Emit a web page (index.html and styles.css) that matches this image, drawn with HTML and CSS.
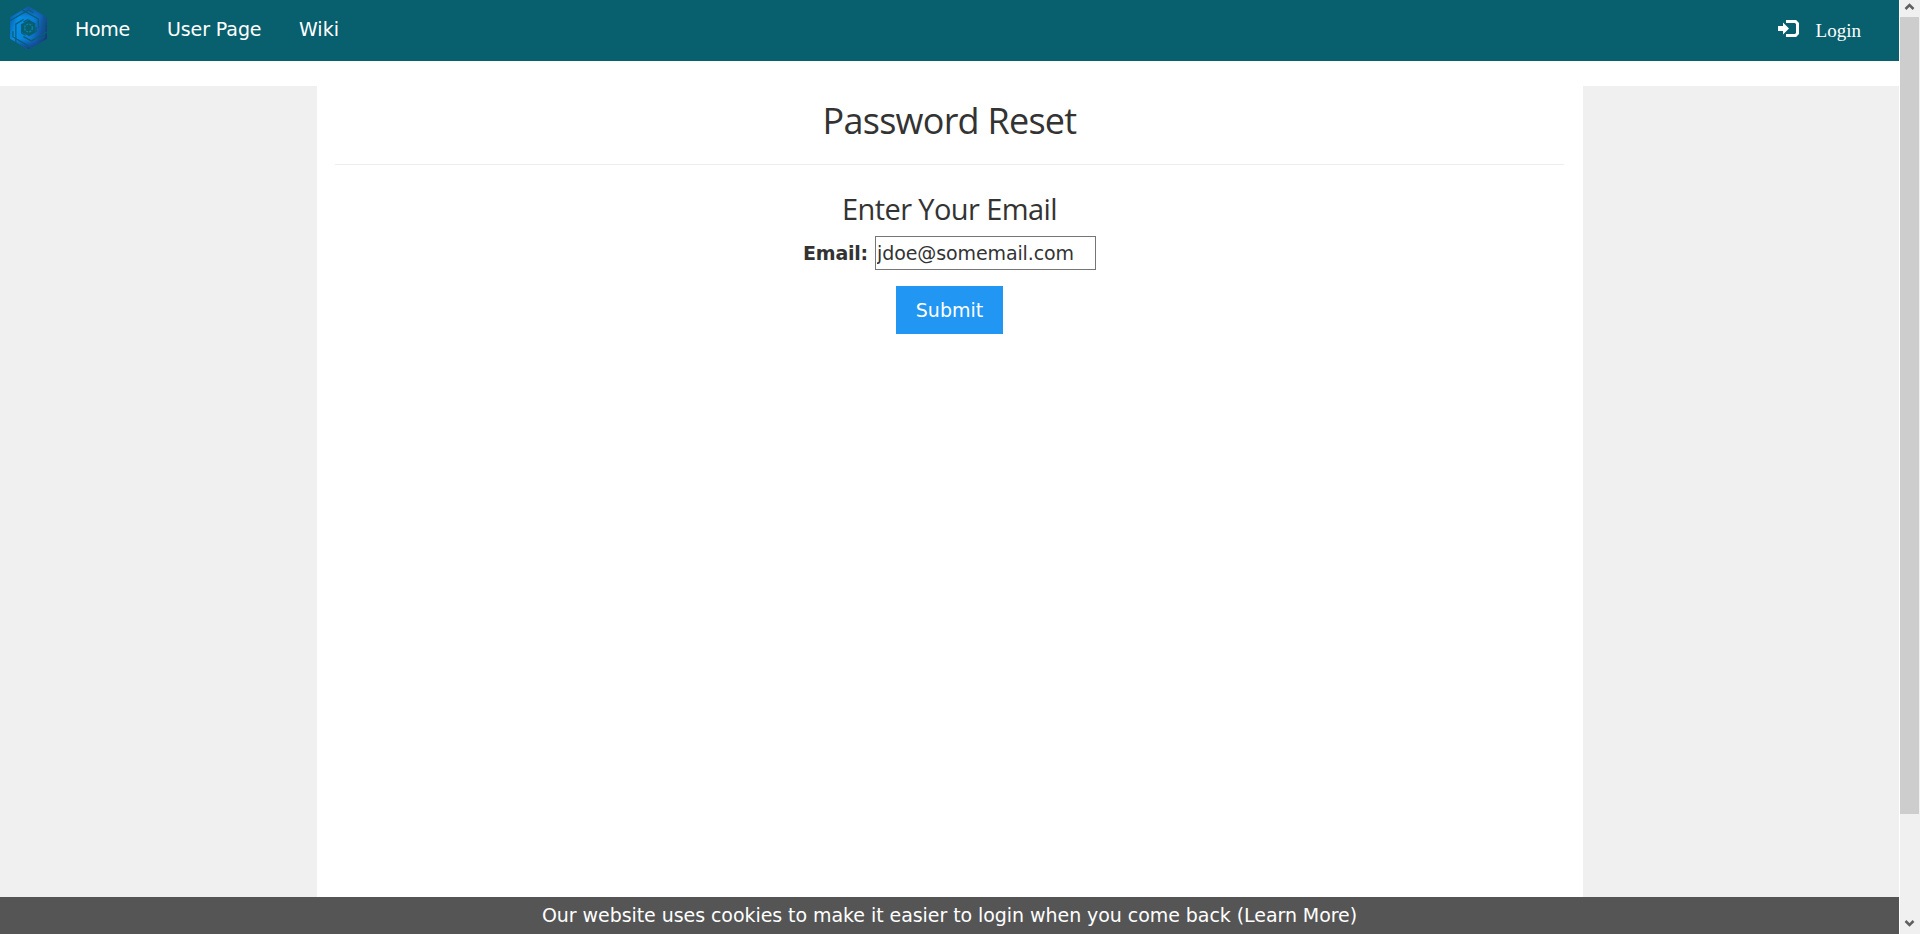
FILE: index.html
```
<!DOCTYPE html>
<html lang="en">
<head>
<meta charset="utf-8">
<title>Password Reset</title>
<link rel="stylesheet" href="styles.css">
</head>
<body>
<div class="page">
  <nav class="navbar">
    <svg class="logo" viewBox="0 0 38 44">
      <defs>
        <linearGradient id="blue" x1="0" y1="0.3" x2="1" y2="0.6">
          <stop offset="0" stop-color="#0a62b4"/>
          <stop offset="0.2" stop-color="#078fe6"/>
          <stop offset="0.6" stop-color="#0a7cd4"/>
          <stop offset="1" stop-color="#183a80"/>
        </linearGradient>
        <linearGradient id="shade" x1="0" y1="0" x2="0" y2="1">
          <stop offset="0" stop-color="#174a94" stop-opacity="0.9"/>
          <stop offset="0.25" stop-color="#174a94" stop-opacity="0"/>
          <stop offset="0.75" stop-color="#173e88" stop-opacity="0"/>
          <stop offset="1" stop-color="#173e88"/>
        </linearGradient>
      </defs>
      <path fill="url(#blue)" d="M19 0 38 11V33L19 44 0 33V11Z"/>
      <path fill="url(#shade)" d="M19 0 38 11V33L19 44 0 33V11Z"/>
      <path fill="#085f6d" d="M19 14 26 18V26L19 30 12 26V18Z"/>
      <g fill="none" stroke="#085f76" stroke-width="1.300">
        <path id="blade" d="M6 37V18L14 13"/>
        <use href="#blade" transform="rotate(120 19 22)"/>
        <use href="#blade" transform="rotate(240 19 22)"/>
        <path id="edge" d="M0 14.500 19 3.500 24 6.500"/>
        <use href="#edge" transform="rotate(120 19 22)"/>
        <use href="#edge" transform="rotate(240 19 22)"/>
        <path id="inner" d="M12 18V27L16 29.500"/>
        <use href="#inner" transform="rotate(120 19 22)"/>
        <use href="#inner" transform="rotate(240 19 22)"/>
      </g>
      <circle cx="19" cy="22" r="4" fill="none" stroke="#0b7fa5" stroke-width="1.500" stroke-dasharray="2.200 1"/>
    </svg>
    <a class="nav-link home">Home</a>
    <a class="nav-link user">User Page</a>
    <a class="nav-link wiki">Wiki</a>
    <a class="login">
      <svg class="login-icon" viewBox="0 0 21 17">
        <path fill="#fff" d="M0 6H5V2.500L11 8.500 5 14.500V11H0Z"/>
        <path fill="none" stroke="#fff" stroke-width="3" d="M8 1.500H17.500L19.500 3.500V13.500L17.500 15.500H8"/>
      </svg>
      <span>Login</span>
    </a>
  </nav>
  <div class="columns">
    <aside class="side"></aside>
    <main class="content">
      <h1 class="title"><span>Password Reset</span></h1>
      <hr class="rule">
      <h2 class="subtitle"><span>Enter Your Email</span></h2>
      <form class="form">
        <div class="field">
          <label class="label" for="email">Email:</label>
          <input class="input" id="email" type="text" value="jdoe@somemail.com">
        </div>
        <button class="submit" type="button">Submit</button>
      </form>
    </main>
    <aside class="side right"></aside>
  </div>
  <footer class="cookies"><span>Our website uses cookies to make it easier to login when you come back (Learn More)</span></footer>
</div>
<div class="scrollbar">
  <svg class="arrow" viewBox="0 0 20 17"><path d="M5.500 9 9.500 5 13.500 9"/></svg>
  <div class="thumb"></div>
  <svg class="arrow down" viewBox="0 0 20 17"><path d="M5.500 4 9.500 8 13.500 4"/></svg>
</div>
</body>
</html>
```
FILE: styles.css
```
* { box-sizing: border-box; }
body {
  margin: 0;
  height: 934px;
  display: flex;
  overflow: hidden;
  background: #fff;
  color: #333;
  font-family: "DejaVu Sans", Verdana, sans-serif;
  font-size: 19px;
}
.page {
  width: 1899px;
  height: 934px;
  display: flex;
  flex-direction: column;
}
.navbar {
  height: 61px;
  flex: none;
  display: flex;
  align-items: flex-start;
  background: #085f6d;
  color: #fff;
  padding-left: 10px;
}
.logo { width: 37px; height: 44px; margin-top: 6px; }
.nav-link { line-height: 22px; margin-top: 18px; white-space: nowrap; }
.home { margin-left: 28px; width: 92px; letter-spacing: -0.3px; }
.user { width: 132px; letter-spacing: -0.1px; }
.login {
  display: flex;
  margin: 18px 38px 0 auto;
  font: 19px/26px "Liberation Serif", serif;
}
.login-icon { width: 21px; height: 17px; margin: 2px 17px 0 0; }
.columns { flex: 1; display: flex; margin-top: 25px; }
.side { width: 317px; background: #f0f0f0; }
.right { width: 316px; }
.content { flex: 1; padding: 0 19px 0 18px; text-align: center; }
.title, .subtitle { font-family: "Open Sans", sans-serif; font-weight: 400; margin: 0; }
.title { font-size: 36px; line-height: 50px; padding-top: 10px; letter-spacing: -0.75px; }
.rule { border: 0; border-top: 1px solid #eee; margin: 18px 0 0; }
.subtitle { font-size: 29px; line-height: 40px; margin-top: 24px; letter-spacing: -0.6px; }
.form { display: flex; flex-direction: column; align-items: center; }
.field { display: flex; align-items: center; margin-top: 7px; }
.label { font-weight: 700; width: 72px; text-align: left; letter-spacing: -0.2px; }
.input {
  width: 221px;
  height: 34px;
  padding: 0 1px;
  border: 1px solid #767676;
  background: #fff;
  color: #333;
  font: inherit;
  letter-spacing: -0.1px;
}
.submit {
  width: 107px;
  height: 48px;
  margin-top: 16px;
  padding: 0;
  border: 0;
  background: #2196f3;
  color: #fff;
  font: inherit;
}
.cookies {
  height: 37px;
  flex: none;
  background: #555;
  color: #fff;
  line-height: 36px;
  text-align: center;
  white-space: nowrap;
  letter-spacing: -0.06px;
}
.scrollbar {
  width: 20px;
  height: 934px;
  margin-left: 1px;
  display: flex;
  flex-direction: column;
  background: #f0f0f0;
}
.arrow { width: 20px; height: 17px; flex: none; fill: none; stroke: #606060; stroke-width: 2.5; }
.thumb { width: 19px; height: 797px; background: #cdcdcd; }
.down { margin-top: auto; }
```
